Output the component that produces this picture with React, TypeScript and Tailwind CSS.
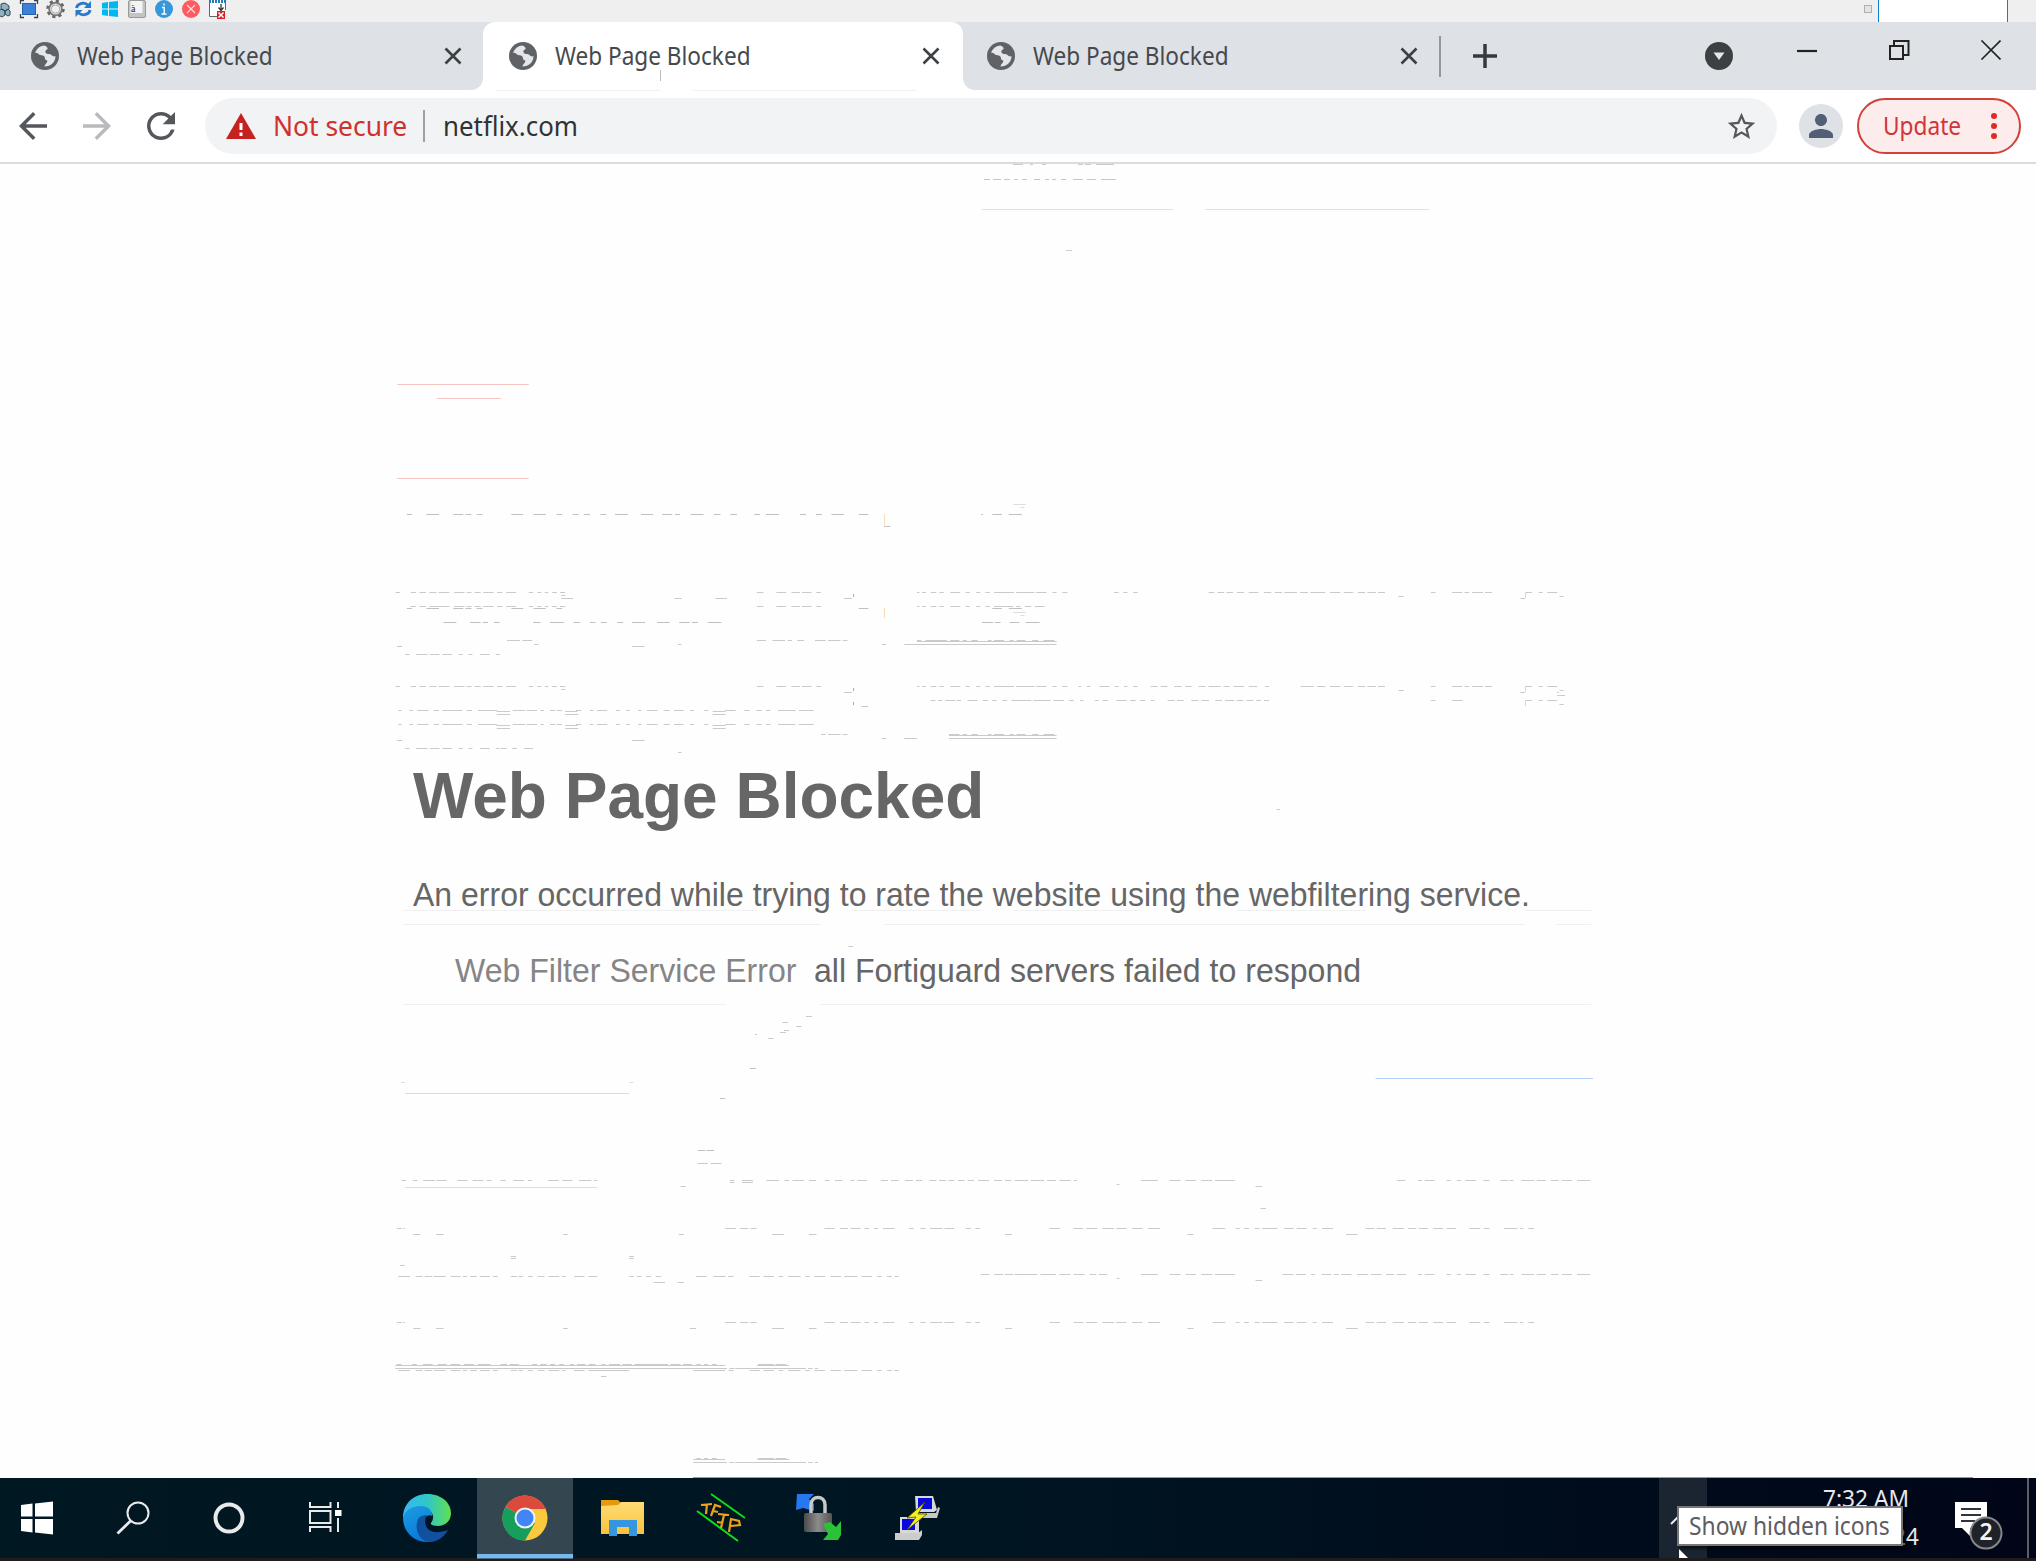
import { useLayoutEffect, useRef, useState } from "react";
import { MdArrowBack, MdArrowForward, MdRefresh, MdStarBorder, MdPerson } from "react-icons/md";

/** A single line of text stretched horizontally to an exact width. */
function FitText({ w, className = "", children }: { w: number; className?: string; children: string }) {
  const ref = useRef<HTMLSpanElement>(null);
  const [k, setK] = useState(1);
  useLayoutEffect(() => {
    if (ref.current) setK(w / ref.current.offsetWidth);
  }, [w]);
  return (
    <span className={"block shrink-0 whitespace-nowrap " + className} style={{ width: w }}>
      <span ref={ref} className="inline-block origin-left" style={{ transform: `scaleX(${k})` }}>
        {children}
      </span>
    </span>
  );
}

const Globe = () => (
  <svg viewBox="0 0 28 28" className="size-7 shrink-0">
    <circle cx="14" cy="14" r="14" fill="#5f6368" />
    <path
      d="M13.500 3.500c-4 0-8 3-9.500 7.500 2-.5 3 .5 4 1.500 1.500 1 3.500.5 5 1.500 1.500 1.500.5 3.500 2 4 2 .5 1.500 2.500 0 3.500-1 1-1.500 2-1.500 3 6.500 0 11-4.500 11-10.500-1.500 1-3 0-4-1-1.500-1.500-3.500-.5-5-1.500-2-1.500-1-3.500.5-4 1.500-1 .5-2.500-2.500-4z"
      fill="#e4e6ea"
    />
    <path d="M9 14.500c2 0 4 .5 4.500 2.500l-2 2.500-3-2z" fill="#5f6368" />
  </svg>
);

const CloseX = () => (
  <svg viewBox="0 0 18 18" className="size-[18px] shrink-0">
    <path d="M1.500 1.500L16.500 16.500M16.500 1.500L1.500 16.500" stroke="#3c4043" strokeWidth="2.600" />
  </svg>
);

function ToolStrip() {
  return (
    <div className="flex h-[22px] justify-between bg-[#efefef]">
      <svg viewBox="0 0 240 22" className="h-[22px] w-[240px]">
        <g stroke="#33474f" fill="#8fb3c4">
          <path d="M1 4l4-1 4 3v3l-4 2-4-2zM-2 11l4-2 3 2v4l-3 2-4-2zM5 11l3-2 2 2v4l-2 1-3-2z" />
        </g>
        <rect x="22.500" y="3.500" width="13" height="11" fill="#3c80d8" stroke="#2460b0" />
        <path d="M20.500 4V.5H24M34 .5h3.500V4M20.500 14v3.500H24M34 17.500h3.500V14" fill="none" stroke="#33424e" strokeWidth="1.300" />
        <circle cx="55.500" cy="9" r="5.500" fill="none" stroke="#777" strokeWidth="3.500" />
        <circle cx="55.500" cy="9" r="8" fill="none" stroke="#666" strokeWidth="2.500" strokeDasharray="3.200 3.083" />
        <circle cx="55.500" cy="9" r="4.800" fill="none" stroke="#d5d5d0" strokeWidth="1.600" />
        <g fill="none" stroke="#2878cc" strokeWidth="2.800">
          <path d="M76.500 8c.5-4 7-7 12-2.500M90 10c-.5 4-7 7-12 2.500" />
        </g>
        <path d="M91 1v7h-7zM75.500 17v-7h7z" fill="#2878cc" />
        <path d="M102 3l6-1v6.500h-6zM109 2l9-1v7.500h-9zM102 9.500h6V16l-6-1zM109 9.500h9V17l-9-1z" fill="#00b8f0" />
        <rect x="128.500" y=".5" width="17" height="17" rx="1.500" fill="#c4c4c4" stroke="#999" />
        <rect x="130.500" y="1" width="12" height="12" fill="#f4f4f4" />
        <text x="131" y="12" fontSize="10" fontFamily="Liberation Serif" fill="#222">à</text>
        <circle cx="164" cy="9" r="9" fill="#3498db" />
        <path d="M164 3.500v2M162 7.500h2.200v6M161.500 14h5" stroke="#fff" strokeWidth="1.400" fill="none" />
        <circle cx="191" cy="9" r="9" fill="#ff5a5f" />
        <path d="M187 5l8 8M195 5l-8 8" stroke="#ffd9d9" strokeWidth="1.200" />
        <path d="M209.500 0v16.500H217M225.500 0v10" fill="none" stroke="#666" />
        <rect x="210" y="0" width="15" height="16" fill="#fff" />
        <path d="M209 1.500h18" stroke="#2878b8" strokeWidth="3" strokeDasharray="2 1" />
        <path d="M221 4v6M218.500 7.500l2.500 3 2.500-3" stroke="#333" strokeWidth="1.300" fill="none" />
        <rect x="217" y="11" width="8" height="8" fill="#dc1f26" />
        <path d="M218.500 12.500l5 5M223.500 12.500l-5 5" stroke="#fff" strokeWidth="1.500" />
      </svg>
      <div className="flex">
        <div className="mt-[5px] mr-[6px] h-2 w-2 border border-[#b0b0b0] bg-[#e4e4e4]" />
        <div className="mr-7 w-[130px] border-x border-[#1080cc] bg-white" />
      </div>
    </div>
  );
}

function TabLabel() {
  return (
    <>
      <Globe />
      <FitText w={196} className="ml-[18px] pb-[3px] font-['Noto_Sans'] text-[25px] leading-[34px] text-[#45494d]">
        Web Page Blocked
      </FitText>
      <div className="ml-[171px]"><CloseX /></div>
    </>
  );
}

function TabStrip() {
  return (
    <div className="flex h-[68px] bg-white">
      <div className="flex w-[483px] items-center rounded-br-xl bg-[#dee1e6] pl-[31px]">
        <TabLabel />
      </div>
      <div className="w-[480px] bg-linear-to-b from-[#dee1e6] from-50% to-white to-50%">
        <div className="flex h-full items-center rounded-t-xl bg-white pl-[26px]">
          <TabLabel />
        </div>
      </div>
      <div className="flex flex-1 items-center rounded-bl-xl bg-[#dee1e6] pl-[24px]">
        <TabLabel />
        <div className="ml-[21px] h-[41px] w-[2px] bg-[#94979c]" />
        <svg viewBox="0 0 24 24" className="ml-8 size-6"><path d="M12 0v24M0 12h24" stroke="#36393d" strokeWidth="3.500" /></svg>
        <svg viewBox="0 0 28 28" className="ml-[208px] size-7">
          <circle cx="14" cy="14" r="14" fill="#3c4043" />
          <path d="M8.500 10.500h11L14 18z" fill="#e4e6ea" />
        </svg>
        <svg viewBox="0 0 204 20" className="mb-3 ml-16 h-5 w-[204px]" fill="none" stroke="#222">
          <path d="M0 11h20" strokeWidth="2.200" />
          <path d="M93 6h13v13H93zM97 6V1h14.500v14H106" strokeWidth="2" />
          <path d="M184.500.500l19 19M203.500.500l-19 19" strokeWidth="1.600" />
        </svg>
      </div>
    </div>
  );
}

function Toolbar() {
  return (
    <div className="flex h-[74px] items-start border-b-2 border-[#dadce0] bg-white pt-2">
      <div className="flex h-14 w-[205px] items-center">
        <MdArrowBack className="ml-[12px] size-[42px] text-[#54575b]" />
        <MdArrowForward className="ml-[22px] size-[42px] text-[#b8babd]" />
        <MdRefresh className="ml-[22px] size-[42px] text-[#54575b]" />
      </div>
      <div className="flex h-14 w-[1572px] items-center rounded-full bg-[#f1f3f4]">
        <svg viewBox="0 0 30 26" className="ml-[21px] h-[26px] w-[30px]">
          <path d="M15 0L30 26H0z" fill="#c5221f" />
          <path d="M15 10v7M15 19.500v3.500" stroke="#fff" strokeWidth="3" />
        </svg>
        <FitText w={134} className="ml-[17px] font-['Noto_Sans'] text-[27px] leading-[36px] text-[#d0312d]">Not secure</FitText>
        <div className="ml-[16px] h-8 w-[2px] bg-[#9aa0a6]" />
        <FitText w={135} className="ml-[18px] font-['Noto_Sans'] text-[27px] leading-[36px] text-[#303336]">netflix.com</FitText>
        <MdStarBorder className="mr-[19px] ml-auto size-[33px] text-[#55585c]" />
      </div>
      <div className="ml-[22px] flex h-14 items-center">
        <div className="flex size-11 items-center justify-center rounded-full bg-[#dee1e6]">
          <MdPerson className="size-9 text-[#535f75]" />
        </div>
      </div>
      <div className="ml-[14px] flex h-14 w-[164px] items-center rounded-full border-[2.5px] border-[#d2403a] bg-[#fceceb] pl-[24px]">
        <FitText w={78} className="pb-[2px] font-['Noto_Sans'] text-[25px] leading-[34px] text-[#d0353a]">Update</FitText>
        <div className="ml-[30px] flex flex-col gap-[4px]">
          <i className="size-[6px] rounded-full bg-[#dd2c24]" />
          <i className="size-[6px] rounded-full bg-[#dd2c24]" />
          <i className="size-[6px] rounded-full bg-[#dd2c24]" />
        </div>
      </div>
    </div>
  );
}

type Row = [number, string, string];
type Patch = { x: number; y: number; k: number; rows: Row[] };

const T = "#cacacd";
const H = "#c0c0c3";
const L = "#f0f0f0";

const baseYour = "62-74 107-136 169-192 197-211 223-236";
const info = "1238-1244 1250-1259 1270-1283 1290-1300 1315-1338 1350-1360 1375-1384 1396-1406 1416-1460 1467-1477 1487-1502";
const visited = "42-50 68-76 86-112 124-136 144-190 200-212 226-270";
const visited2 = "306-334 338-362 370-378 392-404 408-420 452-464 484-492 500-524 544-553 568-576 595-603 616-640 654-668 678-700 715-724 748-757 796-820 840-852 868-880 890-900 918-958 966-1000";
const attack = "36-46 71-83 91-106 114-130 135-160 171-195 200-211 218-232 238-262 270-282 291-314 343-353 363-372 380-388 397-408 415-427";
const passw = "58-68 83-110 115-137 144-166 182-191 204-213 231-253 267-276";
const site = "5-37 50-70 77-90 96-120 138-146 163-176";
const sites2 = "786-820 828-850 862-889 898-923 935-954 960-982 988-1006";
const tail = "1126-1138 1182-1208";
const tail2 = "1214-1226 1234-1262 1267-1286";
const pre = "1374-1390 1408-1418 1430-1456";
const attack2 = "43-71 85-101 106-124 128-156 168-191 197-207 214-230 237-261 268-280 311-325 329-340 352-363 375-391 400-426 432-441 461-486 495-516";
const conn = "878-902 911-936 947-958 970-999 1010-1021 1032-1057 1070-1095 1103-1134 1144-1169 1181-1192 1205-1216 1222-1232";
const own = "820-846 855-875 880-895 1056-1080 1093-1112 1118-1142 1151-1162 1173-1183 1195-1222 1257-1268 1284-1296 1307-1336 1341-1364 1392-1404 1415-1425";
const certA = "430-470 498-524 536-560 573-599 606-653";
const certB = "1088-1098 1104-1127 1156-1166 1180-1190 1201-1226 1243-1258 1284-1302 1306-1315 1334-1364 1370-1392 1404-1422 1430-1454 1466-1497";
const misconf = "14-26 37-48 213-237 270-293 300-326 338-366 371-395 409-433 446-475 600-630 655-664 675-686 700-712 718-754 770-793 800-823 838-847 860-886 964-984 990-1012 1028-1055 1065-1084 1090-1112 1124-1148 1156-1178 1210-1236 1244-1258 1292-1324 1330-1338 1350-1364";

const patches: Patch[] = [
  {
    x: 0, y: 0, k: 1,
    rows: [
      [58.5, "#ccc", "618-623"],
      [164.5, "#ccc", "1013-1023 1030-1033 1042-1046 1078-1083 1085-1091 1096-1114"],
      [179.5, "#c6c6c6", "984-990 993-1001 1004-1010 1014-1018 1022-1027 1034-1040 1045-1049 1052-1056 1061-1066 1073-1083 1087-1096 1101-1116"],
      [209.5, "#dfe1e5", "982-1173 1205-1429"],
      [250.5, "#ccc", "1066-1072"],
      [90.5, "#f2f2f2", "495-661 693-917"],
      [1477.5, "#9a9a9a", "693-1973"],
    ],
  },
  {
    x: 380, y: 360, k: 680 / 1568,
    rows: [
      [73.5, "#f6c5c2", "40-343"],
      [115.5, "#f6c5c2", "131-279"],
      [355.5, "#f6c5c2", "40-343"],
      [433.5, "#ddd", "1460-1489"],
      [442.5, "#ddd", "1477-1486"],
      [463.5, H, baseYour + " 303-330 354-382 407-420 444-458 470-484 508-522 542-572 602-630 651-674 680-692 716-746 770-785 808-823 863-876 890-920 968-982 1005-1019 1041-1070 1104-1126 1386-1390 1412-1434 1450-1480"],
      [499.5, H, "1163-1177"],
      [697.5, T, attack + " 869-884 914-936 949-968 973-995 1006-1017 " + info + " 1513-1537 1551-1560"],
      [706.5, T, "418-427"],
      [715.5, T, "418-445 679-696 773-800 1070-1088"],
      [739.5, T, "70-83 91-106 114-160 171-195 200-211 218-232 238-262 270-282 291-314 343-353 363-372 380-388 397-408 415-427 869-884 914-936 949-968 973-995 1006-1017 " + info + " 1510-1533"],
      [745.5, H, baseYour + " 303-330 354-382 407-420 1104-1126 1412-1434 1450-1480"],
      [757.5, "#ddd", "1460-1489"],
      [766.5, "#ddd", "1477-1486"],
      [787.5, H, "146-176 208-232 237-249 263-276 353-370 392-424 446-461 484-497 509-523 547-561 581-611 639-668 690-714 719-733 756-787 1388-1414 1418-1431 1452-1474 1489-1521"],
      [841.5, T, "293-323 328-351 869-890 905-934 940-950 962-978 1003-1028 1033-1062 1067-1078 1238-1248 1258-1307 1315-1336 1344-1353 1364-1378 1402-1410 1416-1439 1452-1461 1468-1488 1504-1518 1530-1555"],
      [844.5, T, "1238-1560"],
      [853.5, T, "355-365 687-695 1157-1167 1209-1560"],
      [859.5, T, "39-51 581-610"],
      [883.5, T, passw],
      [979.5, T, attack + " 869-884 914-936 949-968 973-995 1006-1017 " + info + " 1513-1537 1551-1560"],
      [988.5, T, "418-427"],
      [997.5, T, "1070-1088"],
      [1021.5, T, "1270-1281 1287-1297 1304-1326 1330-1340 1355-1378 1390-1402 1412-1422 1435-1446 1456-1502 1506-1516 1527-1546 1553-1568"],
      [1039.5, T, "1110-1126"],
      [1051.5, T, visited + " " + visited2],
      [1054.5, T, "269-300 427-455 767-797"],
      [1063.5, T, "269-300 427-457 767-797"],
      [1093.5, T, visited + " " + visited2],
      [1096.5, T, "269-300 427-455 767-797"],
      [1105.5, T, "269-300 427-457 767-797"],
      [1123.5, T, "1017-1028 1033-1062 1067-1078 1312-1336 1344-1353 1364-1378 1402-1410 1416-1439 1452-1461 1468-1488 1504-1518 1530-1555"],
      [1126.5, T, "1312-1560"],
      [1135.5, T, "1157-1167 1209-1238 1312-1560"],
      [1141.5, T, "39-51 581-610"],
      [1165.5, T, passw + " 279-292 305-316 332-353"],
      [1177.5, T, "687-695"],
    ],
  },
  {
    x: 1000, y: 480, k: 600 / 1568,
    rows: [
      [337.5, T, "298-310 322-333 348-360 545-560 568-586 592-609 619-637 650-675 690-709 718-737 743-776 784-805 811-850 862-889 898-923 935-954 960-982 988-1006 " + tail + " " + tail2 + " " + pre],
      [349.5, T, "1041-1055 1462-1473"],
      [355.5, T, "1360-1372"],
      [619.5, T, "205-212 227-236 260-286 300-310 324-333 348-360 394-412 420-438 455-475 484-501 519-537 545-576 584-600 610-637 650-672 692-703 " + sites2 + " " + tail + " " + tail2 + " " + pre],
      [337.5, T, site],
      [619.5, T, site],
      [631.5, T, "1041-1055 1462-1473"],
      [637.5, T, "1360-1372 1456-1461"],
      [646.5, T, "1456-1477"],
      [661.5, T, "95-112 118-132 142-167 180-193 209-218 248-258 268-282 304-330 340-355 366-379 394-403 438-456 463-480 500-518 527-546 563-580 588-612 618-636 644-662 670-682 690-703 " + tail + " " + pre],
      [673.5, T, "1462-1473"],
    ],
  },
  {
    x: 380, y: 740, k: 680 / 1568,
    rows: [
      [511.5, L, "54-869 1090-1387 1460-1568"],
      [553.5, L, "54-1017 1164-1568"],
      [619.5, T, "1080-1091"],
      [793.5, L, "54-797 1017-1568"],
      [829.5, T, "982-996"],
      [847.5, T, "928-941"],
      [859.5, T, "960-972"],
      [871.5, T, "931-943"],
      [877.5, T, "923-936"],
      [883.5, T, "864-869"],
      [895.5, T, "895-907"],
    ],
  },
  {
    x: 960, y: 800, k: 660 / 1568,
    rows: [
      [28.5, T, "752-760"],
      [331.5, L, "236-430 658-963 1342-1500"],
      [373.5, L, "236-1342 1418-1500"],
      [613.5, L, "236-1500"],
      [835.5, "#b3d2fb", "987-1504"],
    ],
  },
  {
    x: 380, y: 1060, k: 660 / 1568,
    rows: [
      [25.5, H, "879-893"],
      [67.5, "#ddd", "50-59 592-602"],
      [100.5, "#ddd", "59-592"],
      [115.5, H, "808-820"],
      [271.5, H, "755-773 776-794"],
      [310.5, T, "755-779 786-811"],
      [361.5, T, "51-62 78-89 103-130 134-158 184-208 220-246 254-265 286-299 317-342 351-361 399-424 433-457 473-502 508-516 831-842 860-886 918-948 961-972 980-1007 1019-1036 1057-1068 1081-1098 1118-1127 1134-1157 1190-1207 1214-1232 1247-1266 1273-1288 1306-1322 1328-1345 1350-1365 1373-1389 1396-1411 1421-1447 1459-1478 1485-1500 1508-1540 1546-1562"],
      [367.5, T, "831-842 860-886"],
      [379.5, T, "714-726"],
      [382.5, "#ddd", "59-516"],
      [505.5, T, "40-52 55-59 " + own],
      [523.5, T, "79-96 133-151 435-446 710-722 932-960 1019-1037 1486-1502"],
      [589.5, T, "311-323 592-603"],
      [595.5, T, "311-323 592-603"],
      [616.5, T, "48-59"],
      [643.5, T, "1427-1447 1459-1478 1485-1500 1508-1540 1546-1562"],
      [649.5, T, attack2 + " 592-603 610-621 632-644 655-668 751-776 792-821 827-840 " + conn],
      [667.5, T, "650-677 707-722"],
      [787.5, T, "40-52 55-59 " + own],
      [805.5, T, "79-96 133-151 435-446 736-751 932-960 1019-1037 1486-1502"],
      [913.5, T, "40-51 76-87 102-125 137-158 167-190 199-223 232-262 286-302 308-330 361-373 381-396 404-416 426-437 452-461 468-488 496-512 526-536 544-570 576-598 604-684 690-714 720-741 752-762 770-779 789-800 898-936 940-965"],
      [916.5, T, "36-820 896-972"],
      [925.5, T, "36-824 830-842 844-1012 1017-1028 1033-1041"],
      [931.5, T, attack2 + " 516-592 744-820 828-840 " + conn],
      [949.5, T, "525-538"],
      [1195.5, T, "752-762 770-779 789-800 898-936 940-965"],
      [1198.5, T, "744-820 896-972"],
      [1207.5, T, "744-824 830-842 844-1012 1017-1028 1033-1041"],
    ],
  },
  {
    x: 960, y: 1120, k: 660 / 1568,
    rows: [
      [181.5, T, "182-200 207-228 236-262 270-278 " + certA + " 1038-1058 " + certB],
      [193.5, T, "372-379"],
      [199.5, T, "702-718"],
      [265.5, T, "714-727"],
      [325.5, T, misconf],
      [343.5, T, "107-123 540-555 917-945"],
      [463.5, T, "50-70 82-103 108-127 132-148 152-180 191-228 236-262 270-296 308-324 330-350 " + certA + " 766-792 798-822 834-843 859-882 888-900 906-930 943-970 976-1002 1012-1031 1038-1060 " + certB],
      [475.5, T, "372-379"],
      [481.5, T, "702-718"],
      [607.5, T, misconf],
      [625.5, T, "107-123 540-555 917-945"],
    ],
  },
];

const toPath = (y: number, spans: string) =>
  spans.split(" ").map((s) => s.split("-")).map(([a, b]) => `M${a} ${y}H${b}`).join("");

/** Stale scan lines left on the page by the remote-console video stream. */
function StaleScanlines() {
  return (
    <svg viewBox="0 0 2036 1561" className="pointer-events-none absolute inset-0 h-[1561px] w-[2036px]">
      {patches.map((p, i) => (
        <g key={i} transform={`translate(${p.x} ${p.y}) scale(${p.k} ${i ? 1 / 3 : 1})`}>
          {p.rows.map(([y, c, spans], j) => (
            <path key={j} d={toPath(y, spans)} stroke={c} strokeWidth={i ? 3 : 1} />
          ))}
        </g>
      ))}
      <path d="M660.500 70v11" stroke="#bbb" />
      <path d="M884.500 514v12M884.500 608v10" stroke="#f5dcb8" />
      <path d="M853.500 594v3M853.500 688v3M853.500 702v3" stroke="#aab" />
      <path d="M1525.500 592v6M1525.500 686v6M1525.500 700v6" stroke="#c8dcf8" />
    </svg>
  );
}

function PageBody() {
  return (
    <div className="h-[1314px] bg-[#fefefe] pt-[590px] pl-[413px] font-['Liberation_Sans'] text-[#666]">
      <FitText w={571} className="text-[65px] leading-[84px] font-bold">Web Page Blocked</FitText>
      <FitText w={1117} className="mt-[31px] text-[33px] leading-[52px]">
        An error occurred while trying to rate the website using the webfiltering service.
      </FitText>
      <div className="mt-6 ml-[42px] flex text-[33px] leading-[52px]">
        <FitText w={341} className="text-[#858585]">Web Filter Service Error</FitText>
        <FitText w={547} className="ml-[18px]">all Fortiguard servers failed to respond</FitText>
      </div>
    </div>
  );
}

const TaskIcons = () => (
  <svg viewBox="0 0 960 83" className="h-[83px] w-[960px] shrink-0">
    <defs>
      <linearGradient id="edgeTop" x1="0" x2="1"><stop offset="0" stopColor="#37b8f4" /><stop offset=".5" stopColor="#2fc6c9" /><stop offset="1" stopColor="#62e04e" /></linearGradient>
      <linearGradient id="edgeSide" x1="0" y1="0" x2=".4" y2="1"><stop offset="0" stopColor="#1b9de2" /><stop offset="1" stopColor="#0a7ad8" /></linearGradient>
      <linearGradient id="folder" x1="0" y1="0" x2="0" y2="1"><stop offset="0" stopColor="#ffdc75" /><stop offset="1" stopColor="#f9c23c" /></linearGradient>
      <linearGradient id="lock" x1="0" x2="1"><stop offset="0" stopColor="#4a4a4a" /><stop offset=".5" stopColor="#8c8c8c" /><stop offset="1" stopColor="#555" /></linearGradient>
    </defs>
    <path d="M21 27l11.500-1.500V38.500H21zM35 25.500L53 23.500v15H35zM21 41h11.500v13.500L21 53zM35 41h18v15.500L35 54.500z" fill="#fff" />
    <g fill="none" stroke="#e8eaeb">
      <circle cx="138" cy="35" r="10.500" strokeWidth="2" />
      <path d="M131 42.500l-13.500 13" strokeWidth="2.800" />
      <circle cx="229" cy="40" r="13.500" strokeWidth="4" />
      <path d="M310 24v5h20.500v-5M310 54v-5h20.500v5M310 33h20.500v12H310zM338 24v6M338 40v14" strokeWidth="2" />
    </g>
    <rect x="335" y="32" width="6.500" height="6" fill="#fff" />

    <path d="M403 40c0-14 10-24 24.500-24 14 0 23.500 9 23.500 19 0 8-6 13-13 13-4 0-8-1-7-3 5-6 1-15-10-15-9 0-15 4-18 10z" fill="url(#edgeTop)" />
    <path d="M403 40c2-8 9-12 18-12 7 0 12 5 11 10-1-1-3-1-5 0-8 4-6 14 1 19 3 3 7 6 2 7-17 1-27-11-27-24z" fill="url(#edgeSide)" />
    <path d="M418 41c-5 13 4 23 12 23 8-.5 14-5 18-12-9 3-16 3-20-1-3-3-4-9-1-14-4 0-7 1-9 4z" fill="#11509e" />

    <rect x="477" y="0" width="96" height="76" fill="#34464f" />
    <rect x="477" y="76" width="96" height="4.500" fill="#76b9ed" />
    <circle cx="525" cy="40" r="22.500" fill="#fbc93d" />
    <path d="M525 40L505.500 28.750A22.500 22.500 0 0 1 544.500 28.750L547 31H525z" fill="#dc4a3e" />
    <path d="M505.500 28.750A22.500 22.500 0 0 0 525 62.500L535 45 525 40z" fill="#169f5c" />
    <circle cx="525" cy="40" r="10.500" fill="#eef2f5" />
    <circle cx="525" cy="40" r="8.500" fill="#4285f4" />

    <path d="M601 22h17l3 3v5h-20z" fill="#e59a0c" />
    <path d="M601 28l17-1 3-3h23v32h-43z" fill="url(#folder)" />
    <path d="M609 58V42h28v16h-8v-9h-12v9z" fill="#3495e0" />

    <path d="M711 16l34 24M697 33l41 30" stroke="#0be016" strokeWidth="2" />
    <g stroke="#eda21a" strokeWidth="2.200" fill="none">
      <path d="M701 27l11-1M707 26l-1 10M711 38l4-11 6 2M713 33l5 1M718 36l11 1M724 37l-3 13M717 44l6 1M729 54l2-13 8 2 1 4-9 1" />
    </g>

    <path d="M797 16h17l-5 5 5 5v7l-11-3-7 2z" fill="#2678f0" />
    <path d="M811 36v-9c0-10 14-10 14 0v9" fill="none" stroke="#c8c8c8" strokeWidth="3.500" />
    <rect x="804" y="35" width="28" height="19" rx="2" fill="url(#lock)" />
    <path d="M823 46l7-2 6 5 5-6v14l-3 5h-15l5-6z" fill="#2bc23a" />

    <path d="M915 18h18l4 14-3 2h-18z" fill="#d8d8d8" />
    <path d="M918 20h14v11h-14z" fill="#0808dc" />
    <path d="M912 35h24l2-6 2 1-3 10h-24z" fill="#c8c8c8" />
    <path d="M900 39h19v16h-19z" fill="#d8d8d8" />
    <path d="M902 41h13v11h-13z" fill="#0808dc" />
    <path d="M895 55h23l4-3v5l-3 5h-24z" fill="#ccc" />
    <path d="M925 24l-18 16 9-1-9 13 20-16-9 0z" fill="#f3ee20" stroke="#4c4800" strokeWidth=".8" />
  </svg>
);

function Taskbar() {
  return (
    <div className="relative flex h-[83px] items-start border-b-[3px] border-[#1f1c1b] bg-linear-to-r from-[#001822] via-[#001522] to-[#000618]">
      <TaskIcons />
      <div className="ml-[699px] h-[80px] w-12 bg-[#1b2532]" />
      <div className="mt-[4px] ml-[116px] w-[96px] font-['Noto_Sans'] text-[24px] leading-[32px] text-[#e8e8ea]">
        <FitText w={86}>7:32 AM</FitText>
        <div className="mt-[6px] text-right text-[23px]">24</div>
      </div>
      <svg viewBox="0 0 60 60" className="mt-[18px] ml-[34px] h-[60px] w-[60px]">
        <path d="M2 6h32v26H17v8l-8-8H2z" fill="#fff" />
        <path d="M8 13h20M8 19h20M8 25h14" stroke="#30343c" strokeWidth="2.200" />
        <circle cx="33" cy="37" r="15.500" fill="#1f2228" stroke="#85888c" strokeWidth="2" />
        <text x="33" y="44" textAnchor="middle" fontFamily="Noto Sans" fontSize="23" fontWeight="600" fill="#f4f4f4">2</text>
      </svg>
      <div className="ml-[14px] h-[80px] w-[2px] bg-[#5b5e68]" />
      <svg viewBox="0 0 30 56" className="absolute top-[24px] left-[1670px] h-[56px] w-[30px]">
        <path d="M1 22l7-7" stroke="#eee" strokeWidth="2" />
        <path d="M9 47l9 9H9z" fill="#fff" />
      </svg>
      <div className="absolute top-[28px] left-[1677px] flex h-[40px] w-[226px] items-center border-2 border-[#777] bg-white pb-[2px] pl-[10px] shadow-[3px_3px_3px_rgba(0,0,0,0.6)]">
        <FitText w={201} className="font-['Noto_Sans'] text-[25px] leading-[34px] text-[#5c5c62]">Show hidden icons</FitText>
      </div>
    </div>
  );
}

export default function App() {
  return (
    <div className="relative h-[1561px] w-[2036px] overflow-hidden bg-white">
      <ToolStrip />
      <TabStrip />
      <Toolbar />
      <PageBody />
      <Taskbar />
      <StaleScanlines />
    </div>
  );
}
